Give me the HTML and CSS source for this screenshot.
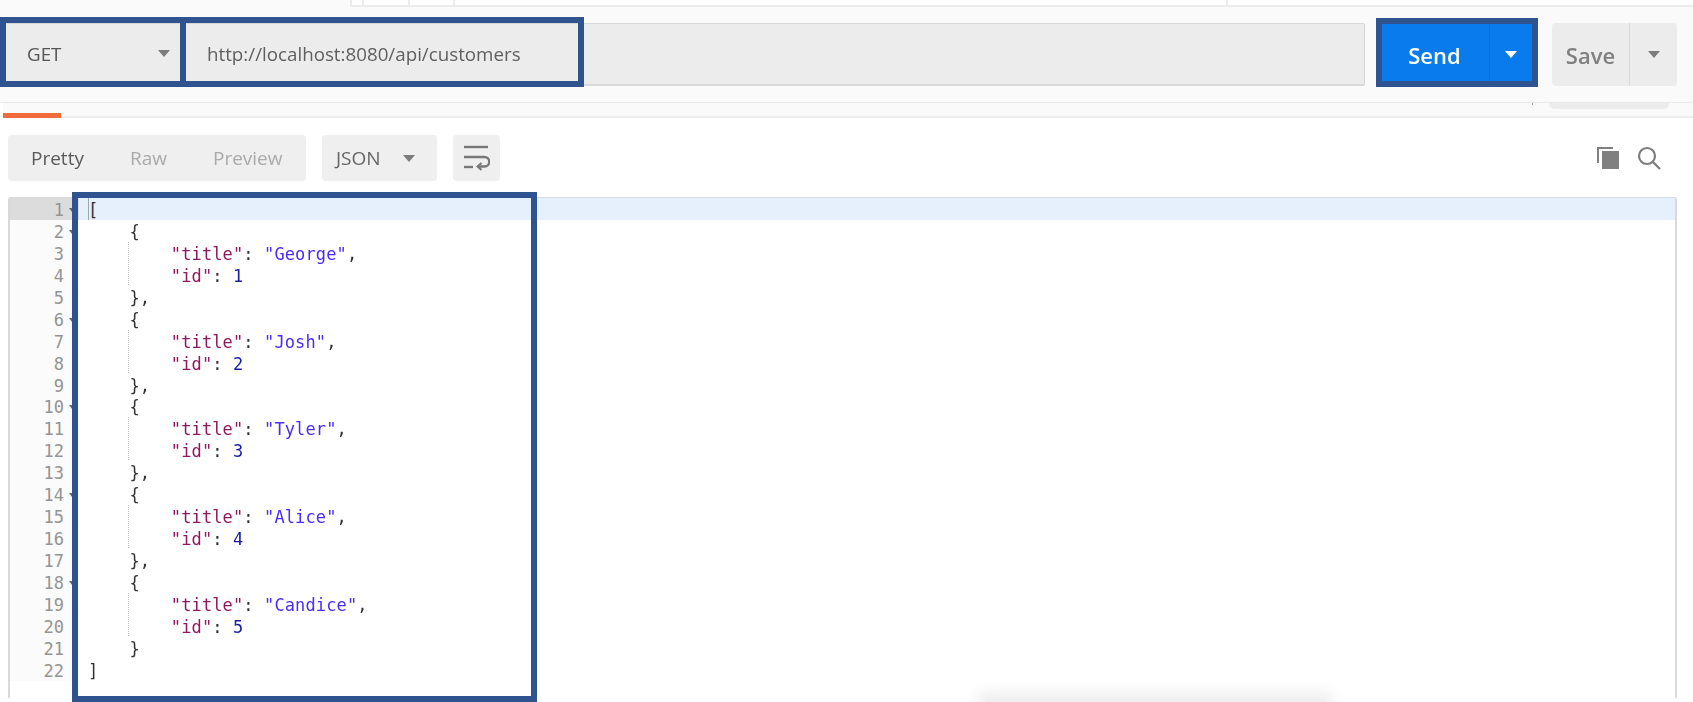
FILE: index.html
```html
<!DOCTYPE html>
<html lang="en">
<head>
<meta charset="utf-8">
<title>Postman response</title>
<link rel="stylesheet" href="styles.css">
</head>
<body>
<div class="app">
  <div class="top-strip">
    <div class="top-cells">
      <span class="cell c1"></span><span class="cell c2"></span><span class="cell c3"></span><span class="cell c4"></span><span class="cell c5"></span>
    </div>
  </div>
  <div class="request-bar">
    <div class="method"><span>GET</span><i class="caret"></i></div>
    <div class="url">http://localhost:8080/api/customers</div>
    <div class="send"><span class="send-label">Send</span><span class="send-more"><i class="caret caret-white"></i></span></div>
    <div class="save"><span class="save-label">Save</span><span class="save-more"><i class="caret"></i></span></div>
  </div>
  <div class="tab-strip">
    <span class="tab-active"></span>
    <span class="tab-dot"></span>
    <span class="tab-stub"></span>
  </div>
  <div class="response-bar">
    <div class="view-group"><span class="view on">Pretty</span><span class="view raw">Raw</span><span class="view preview">Preview</span></div>
    <div class="format"><span>JSON</span><i class="caret"></i></div>
    <div class="wrap-btn">
      <svg width="26" height="27" viewBox="0 0 26 27" fill="none" stroke="#777" stroke-width="2.4"><path d="M0 2H24"/><path d="M0 12H20.5a4.5 4.5 0 0 1 0 9.5H14"/><path d="M0 22H9"/><path d="M17.5 18l-4 3.5 4 3.5" stroke-width="2"/></svg>
    </div>
    <div class="tools">
      <svg width="23" height="23" viewBox="0 0 23 23"><path d="M1 16V1H16" fill="none" stroke="#808080" stroke-width="2"/><rect x="5" y="4" width="17" height="18" fill="#808080"/></svg>
      <svg width="24" height="24" viewBox="0 0 24 24" fill="none" stroke="#7d7d7d" stroke-width="2.2"><circle cx="10" cy="10" r="8"/><path d="M16 16l7 7"/></svg>
    </div>
  </div>
  <div class="editor">
    <div class="line current"><span class="num fold">1</span><code class="code"><span class="cursor"></span>[</code></div>
    <div class="line"><span class="num fold">2</span><code class="code">    {</code></div>
    <div class="line"><span class="num">3</span><code class="code">    <span class="guide">    </span><span class="k">"title"</span>: <span class="s">"George"</span>,</code></div>
    <div class="line"><span class="num">4</span><code class="code">    <span class="guide">    </span><span class="k">"id"</span>: <span class="n">1</span></code></div>
    <div class="line"><span class="num">5</span><code class="code">    },</code></div>
    <div class="line"><span class="num fold">6</span><code class="code">    {</code></div>
    <div class="line"><span class="num">7</span><code class="code">    <span class="guide">    </span><span class="k">"title"</span>: <span class="s">"Josh"</span>,</code></div>
    <div class="line"><span class="num">8</span><code class="code">    <span class="guide">    </span><span class="k">"id"</span>: <span class="n">2</span></code></div>
    <div class="line"><span class="num">9</span><code class="code">    },</code></div>
    <div class="line"><span class="num fold">10</span><code class="code">    {</code></div>
    <div class="line"><span class="num">11</span><code class="code">    <span class="guide">    </span><span class="k">"title"</span>: <span class="s">"Tyler"</span>,</code></div>
    <div class="line"><span class="num">12</span><code class="code">    <span class="guide">    </span><span class="k">"id"</span>: <span class="n">3</span></code></div>
    <div class="line"><span class="num">13</span><code class="code">    },</code></div>
    <div class="line"><span class="num fold">14</span><code class="code">    {</code></div>
    <div class="line"><span class="num">15</span><code class="code">    <span class="guide">    </span><span class="k">"title"</span>: <span class="s">"Alice"</span>,</code></div>
    <div class="line"><span class="num">16</span><code class="code">    <span class="guide">    </span><span class="k">"id"</span>: <span class="n">4</span></code></div>
    <div class="line"><span class="num">17</span><code class="code">    },</code></div>
    <div class="line"><span class="num fold">18</span><code class="code">    {</code></div>
    <div class="line"><span class="num">19</span><code class="code">    <span class="guide">    </span><span class="k">"title"</span>: <span class="s">"Candice"</span>,</code></div>
    <div class="line"><span class="num">20</span><code class="code">    <span class="guide">    </span><span class="k">"id"</span>: <span class="n">5</span></code></div>
    <div class="line"><span class="num">21</span><code class="code">    }</code></div>
    <div class="line"><span class="num">22</span><code class="code">]</code></div>
  </div>
  <div class="floating-shadow"></div>
</div>
<div class="mark mark-method"></div>
<div class="mark mark-url"></div>
<div class="mark mark-send"></div>
<div class="mark mark-body"></div>
</body>
</html>
```
FILE: styles.css
```css
* { box-sizing: border-box; }
html, body { margin: 0; height: 100%; }
body {
  position: relative;
  width: 1693px;
  height: 702px;
  overflow: hidden;
  background: #fff;
  font-family: "Open Sans", "Noto Sans", sans-serif;
}
.app {
  position: relative;
  height: 702px;
  overflow: hidden;
  filter: blur(0.4px);
}
.top-strip {
  height: 7px;
  padding-left: 350px;
  background: #fafafa;
}
.top-cells {
  display: flex;
  height: 7px;
  background: #fff;
  border-bottom: 2px solid #ececec;
}
.cell { border-left: 2px solid #ececec; }
.c1 { width: 12px; }
.c2 { width: 46px; }
.c3 { width: 45px; }
.c4 { width: 773px; }
.c5 { flex: 1; }
.request-bar {
  display: flex;
  height: 96px;
  padding: 16px 16px 16px 6px;
  background: #fafafa;
  border-bottom: 1px solid #e9e9e9;
}
.method {
  display: flex;
  align-items: center;
  justify-content: space-between;
  width: 174px;
  padding: 0 10px 3px 21px;
  background: #ececec;
  color: #555;
  font-size: 18.75px;
  border-top: 1px solid #d8d8d8;
}
.url {
  flex: 1;
  display: flex;
  align-items: center;
  margin-left: 6px;
  padding: 0 0 2px 21px;
  background: #ececec;
  color: #5f5f5f;
  font-size: 18.75px;
  border-top: 1px solid #d8d8d8;
  border-right: 1px solid #d2d2d2;
  border-bottom: 2px solid #d8d8d8;
  border-radius: 0 2px 2px 0;
}
.caret {
  display: block;
  width: 0;
  height: 0;
  border-left: 6px solid transparent;
  border-right: 6px solid transparent;
  border-top: 7px solid #7c7c7c;
}
.caret-white { border-top-color: #fff; }
.send {
  display: flex;
  width: 150px;
  margin-left: 17px;
  background: #097bed;
  color: #fff;
}
.send-label {
  flex: 1;
  display: flex;
  align-items: center;
  justify-content: center;
  padding: 1px 2px 0 0;
  font-size: 22px;
  font-weight: 600;
}
.send-more {
  display: flex;
  align-items: center;
  justify-content: center;
  width: 43px;
  border-left: 1px solid #0b6fd4;
}
.save {
  display: flex;
  width: 125px;
  margin-left: 20px;
  background: #ececec;
  color: #808080;
  border-radius: 4px;
}
.save-label {
  flex: 1;
  display: flex;
  align-items: center;
  justify-content: center;
  padding-top: 1px;
  font-size: 22px;
  font-weight: 600;
}
.save-more {
  display: flex;
  align-items: center;
  justify-content: center;
  width: 48px;
  border-left: 1px solid #d8d8d8;
}
.tab-strip {
  position: relative;
  height: 15px;
  background: #fafafa;
  border-bottom: 2px solid #ededed;
  margin-left: 3px;
}
.tab-active {
  position: absolute;
  left: 0;
  bottom: -2px;
  width: 58px;
  height: 5px;
  background: #f26b3a;
}
.tab-dot {
  position: absolute;
  left: 1529px;
  top: 0;
  width: 1px;
  height: 2px;
  background: #999;
}
.tab-stub {
  position: absolute;
  left: 1546px;
  top: 0;
  width: 120px;
  height: 6px;
  background: #ececec;
  border-radius: 0 0 5px 5px;
}
.response-bar {
  display: flex;
  align-items: stretch;
  height: 46px;
  margin-top: 17px;
  padding: 0 32px 0 8px;
  color: #b0b0b0;
  font-size: 19px;
}
.view-group {
  width: 298px;
  display: flex;
  align-items: center;
  padding-left: 23px;
  background: #efefef;
  border-radius: 4px;
}
.view { color: #aaa; }
.view.on { color: #5a5a5a; }
.view.raw { margin-left: 46px; }
.view.preview { margin-left: 46px; }
.format {
  display: flex;
  align-items: center;
  justify-content: space-between;
  width: 115px;
  margin-left: 16px;
  padding: 0 21px 0 14px;
  background: #efefef;
  color: #666;
  border-radius: 4px;
}
.format .caret { margin-right: 1px; }
.wrap-btn {
  display: flex;
  align-items: center;
  justify-content: center;
  width: 47px;
  margin-left: 16px;
  background: #efefef;
  border-radius: 4px;
}
.tools {
  display: flex;
  align-items: center;
  gap: 17px;
  margin-left: auto;
}
.editor {
  height: 501px;
  margin: 16px 16px 0 8px;
  border: 1px solid #d9d9d9;
  border-radius: 3px 3px 0 0;
  border-width: 1px 2px 0 2px;
  font-family: "DejaVu Sans Mono", "Liberation Mono", monospace;
  font-size: 17px;
  letter-spacing: 0.12px;
  color: #333;
}
.line {
  display: flex;
  height: 21.95px;
  line-height: 25px;
}
.num {
  position: relative;
  flex: none;
  width: 69px;
  height: 21.95px;
  padding-right: 15px;
  text-align: right;
  color: #949494;
  letter-spacing: 0;
  background: #fbfbfb;
}
.fold::after {
  content: "";
  position: absolute;
  left: 59px;
  top: 10px;
  border-left: 3px solid transparent;
  border-right: 3px solid transparent;
  border-top: 4px solid #666;
}
.code {
  flex: 1;
  display: block;
  height: 21.95px;
  padding-left: 9px;
  font: inherit;
  line-height: 25px;
  white-space: pre;
}
.current .num { background: #dcdcdc; }
.current .code { position: relative; background: #e6f0fd; }
.cursor {
  position: absolute;
  left: 9px;
  top: 0;
  width: 1px;
  height: 100%;
  background: #9aa;
}
.guide {
  display: inline-block;
  height: 21.95px;
  margin-left: -1.5px;
  padding-left: 1.5px;
  vertical-align: top;
  background: repeating-linear-gradient(to bottom, #c4c4c4 0 1px, transparent 1px 2px) left top / 1px 100% no-repeat;
}
.k { color: #92175f; }
.s { color: #4a2cf5; }
.n { color: #1b1ba6; }
.floating-shadow {
  position: absolute;
  left: 985px;
  top: 700px;
  width: 340px;
  height: 20px;
  background: #efefef;
  box-shadow: 0 0 14px 8px #efefef;
}
.mark {
  position: absolute;
  border: 6px solid #2f538f;
}
.mark-method { left: 0; top: 17px; width: 186px; height: 70px; }
.mark-url { left: 180px; top: 17px; width: 404px; height: 70px; }
.mark-send { left: 1376px; top: 18px; width: 162px; height: 69px; }
.mark-body { left: 72px; top: 192px; width: 465px; height: 510px; }
```
